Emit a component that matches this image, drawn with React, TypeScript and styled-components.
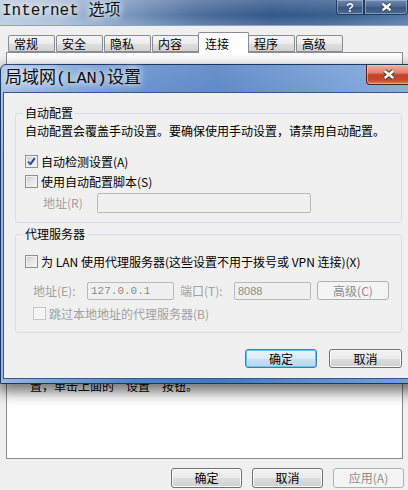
import React from "react";
import styled, { createGlobalStyle } from "styled-components";

const Global = createGlobalStyle`
  html, body { margin: 0; padding: 0; background: #f0f0f0; }
  body { font-family: "Noto Sans CJK SC", "Liberation Sans", sans-serif; font-size: 12px; color: #000; }
  * { box-sizing: border-box; }
`;

const CJK = `"Noto Sans CJK SC", "Liberation Sans", sans-serif`;

const Screen = styled.div`
  position: relative;
  width: 408px;
  height: 490px;
  overflow: hidden;
  background: #f0f0f0;
`;

/* ---------- background window: Internet 选项 ---------- */
const BackWindow = styled.div`
  display: flex;
  flex-direction: column;
  height: 490px;
`;

const BackTitle = styled.div`
  height: 26px;
  display: flex;
  align-items: flex-start;
  border-bottom: 1px solid #8aa3c2;
  background:
    linear-gradient(180deg, rgba(255,255,255,0.18) 0%, rgba(255,255,255,0) 60%, rgba(255,255,255,0.15) 100%),
    linear-gradient(90deg, #b9cadf 0%, #a8bdd6 14%, #7c99c0 30%, #4d6e9c 48%, #34578a 66%, #3a5d8e 82%, #5377a6 100%);
`;

const BackTitleText = styled.div`
  padding-left: 2px;
  line-height: 23px;
  font-size: 16px;
  font-family: "Liberation Mono", "Noto Sans CJK SC", monospace;
  color: #111;
  text-shadow: 0 0 6px #fff, 0 0 10px rgba(255,255,255,0.9);
  white-space: nowrap;
`;

const CaptionGroup = styled.div`
  margin-left: auto;
  display: flex;
`;

const CaptionButton = styled.div<{ $w: number; $red?: boolean; $h: number }>`
  width: ${(p) => p.$w}px;
  height: ${(p) => p.$h}px;
  display: flex;
  align-items: center;
  justify-content: center;
  border: 1px solid ${(p) => (p.$red ? "#5e1a10" : "#243b5e")};
  border-top: none;
  box-shadow: inset 0 0 0 1px ${(p) => (p.$red ? "rgba(255,200,190,0.55)" : "rgba(200,215,235,0.45)")};
  background: ${(p) =>
    p.$red
      ? "linear-gradient(180deg, #eab1a3 0%, #dc8670 40%, #c4402a 52%, #c24a30 80%, #d9805f 100%)"
      : "linear-gradient(180deg, #6f88ad 0%, #4e6b96 45%, #39577f 55%, #4a6a96 100%)"};
  color: #fff;
  font: bold 13px "Liberation Sans", sans-serif;
  text-shadow: 0 0 2px #1c2c44, 0 0 1px #1c2c44;
  &:first-child { border-bottom-left-radius: 4px; }
  &:last-child { border-bottom-right-radius: 4px; }
`;

const BackBody = styled.div`
  flex: 1;
  display: flex;
  flex-direction: column;
  padding-top: 6px;
  background: #f0f0f0;
`;

const TabStrip = styled.div`
  position: relative;
  z-index: 1;
  height: 20px;
  display: flex;
  align-items: flex-end;
  padding-left: 8px;
`;

const Tab = styled.div<{ $active?: boolean }>`
  width: ${(p) => (p.$active ? 51 : 47)}px;
  height: ${(p) => (p.$active ? 21 : 17)}px;
  margin: ${(p) => (p.$active ? "0 -1px -1px -2px" : "0 1px 0 0")};
  padding: ${(p) => (p.$active ? "1px 0 0 6px" : "0 0 0 5px")};
  border: 1px solid #898c95;
  border-bottom: ${(p) => (p.$active ? "none" : "1px solid #898c95")};
  border-radius: 2px 2px 0 0;
  background: ${(p) =>
    p.$active
      ? "#ffffff"
      : "linear-gradient(180deg, #f4f4f4 0%, #ececec 50%, #dedede 51%, #d2d2d2 100%)"};
  display: flex;
  align-items: center;
  font-size: 12px;
  line-height: 12px;
  white-space: nowrap;
`;

const Panel = styled.div`
  flex: 1;
  margin: 0 5px 0 6px;
  border: 1px solid #898c95;
  background: #ffffff;
  padding: 326px 0 0 23px;
`;

const PanelLine = styled.div`
  font-size: 12px;
  line-height: 13px;
  white-space: nowrap;
`;

const BackButtons = styled.div`
  height: 31px;
  display: flex;
  justify-content: flex-end;
  align-items: flex-start;
  gap: 10px;
  padding: 9px 4px 0 0;
`;

const Button = styled.div<{ $w: number; $h: number; $default?: boolean; $disabled?: boolean }>`
  width: ${(p) => p.$w}px;
  height: ${(p) => p.$h}px;
  display: flex;
  align-items: center;
  justify-content: center;
  border-radius: 3px;
  font-size: 12px;
  line-height: 12px;
  white-space: nowrap;
  border: 1px solid ${(p) => (p.$default ? "#3c7fb1" : p.$disabled ? "#adb2b5" : "#707070")};
  color: ${(p) => (p.$disabled ? "#8d8d8d" : "#000")};
  background: ${(p) =>
    p.$default
      ? "linear-gradient(180deg, #eaf5fc 0%, #dcecf7 50%, #c9e0f0 51%, #bcd6ea 100%)"
      : p.$disabled
      ? "#f4f4f4"
      : "linear-gradient(180deg, #f2f2f2 0%, #ebebeb 50%, #dddddd 51%, #cfcfcf 100%)"};
  box-shadow: inset 0 0 0 1px ${(p) => (p.$default ? "#64c8f2" : p.$disabled ? "#f4f4f4" : "#fcfcfc")};
`;

/* ---------- LAN dialog ---------- */
const Dialog = styled.div`
  position: absolute;
  left: 0;
  top: 64px;
  z-index: 2;
  width: 418px;
  height: 320px;
  display: flex;
  flex-direction: column;
  padding: 0 3px 5px 2px;
  border: 1px solid #1b3763;
  border-radius: 6px 6px 0 0;
  background:
    linear-gradient(180deg, rgba(255,255,255,0.2) 0%, rgba(255,255,255,0) 30%),
    linear-gradient(90deg, #9ab8e2 0%, #7ca2d8 12%, #5283c7 32%, #4576bf 52%, #5a8acb 72%, #77a2da 100%);
  box-shadow: 0 6px 14px 2px rgba(0, 0, 0, 0.55);
`;

const DialogTitle = styled.div`
  height: 27px;
  display: flex;
  align-items: flex-start;
`;

const DialogTitleText = styled.div`
  padding-left: 2px;
  line-height: 27px;
  font-size: 17px;
  font-family: "Liberation Mono", "Noto Sans CJK SC", monospace;
  color: #0c0c0c;
  text-shadow: 0 0 6px rgba(255,255,255,0.95), 0 0 10px rgba(255,255,255,0.8);
  white-space: nowrap;
`;

const CloseSlot = styled.div`
  margin-left: auto;
  margin-right: 2px;
  display: flex;
`;

const Client = styled.div`
  flex: 1;
  display: flex;
  flex-direction: column;
  border: 1px solid #34588c;
  background: #f0f0f0;
  padding: 14px 0 10px;
`;

const Group = styled.fieldset<{ $pb: number; $mt?: number }>`
  margin: ${(p) => p.$mt ?? 0}px 11px 0;
  padding: 0 0 ${(p) => p.$pb}px 0;
  min-width: 0;
  border: 1px solid #d5dfe5;
  border-radius: 3px;
`;

const Legend = styled.legend`
  margin-left: 7px;
  padding: 0 2px;
  font-size: 12px;
  line-height: 12px;
  font-family: ${CJK};
`;

const Row = styled.div<{ $mt: number; $pl: number; $h?: number }>`
  margin-top: ${(p) => p.$mt}px;
  padding-left: ${(p) => p.$pl}px;
  height: ${(p) => p.$h ?? 12}px;
  display: flex;
  align-items: center;
  white-space: nowrap;
  font-size: 12px;
  line-height: 12px;
`;

const Label = styled.span<{ $disabled?: boolean; $w?: number }>`
  color: ${(p) => (p.$disabled ? "#a0a0a0" : "#000")};
  width: ${(p) => (p.$w ? `${p.$w}px` : "auto")};
  flex: none;
`;

const CheckBox = styled.span<{ $disabled?: boolean }>`
  width: 13px;
  height: 13px;
  flex: none;
  margin-right: 3px;
  display: flex;
  align-items: center;
  justify-content: center;
  border: 1px solid ${(p) => (p.$disabled ? "#c4c4c4" : "#8e8f8f")};
  background: ${(p) =>
    p.$disabled ? "#f4f4f4" : "linear-gradient(135deg, #c9c9c9 0%, #e4e4e4 45%, #f9f9f9 100%)"};
  box-shadow: inset 0 0 0 1px ${(p) => (p.$disabled ? "#f7f7f7" : "#f2f2f2")};
`;

const Field = styled.div<{ $w: number; $h: number; $mono?: boolean }>`
  width: ${(p) => p.$w}px;
  height: ${(p) => p.$h}px;
  flex: none;
  display: flex;
  align-items: center;
  padding-left: 3px;
  border: 1px solid #b9b9b9;
  border-radius: 2px;
  background: #f0f0f0;
  color: #8a8a8a;
  font-family: ${(p) => (p.$mono ? `"Liberation Mono", monospace` : `"Liberation Sans", sans-serif`)};
  font-size: 11px;
`;

const Gap = styled.span<{ $w: number }>`
  width: ${(p) => p.$w}px;
  flex: none;
`;

const DialogButtons = styled.div`
  margin-top: 16px;
  padding-right: 11px;
  display: flex;
  justify-content: flex-end;
  gap: 12px;
`;

const Check = () => (
  <svg width="9" height="9" viewBox="0 0 9 9">
    <path d="M1.2 4.6 L3.4 7.2 L7.8 1.2" stroke="#27478a" strokeWidth="2" fill="none" strokeLinejoin="round" />
    <path d="M1.6 4.6 L3.4 6.6" stroke="#6f8fcf" strokeWidth="0.8" fill="none" />
  </svg>
);

const XGlyph = ({ w, h }: { w: number; h: number }) => (
  <svg width={w} height={h} viewBox="0 0 13 10">
    <path d="M2.5 1.8 L10.5 8.2 M10.5 1.8 L2.5 8.2" stroke="#3b3b3b" strokeWidth="4.2" fill="none" />
    <path d="M2.5 1.8 L10.5 8.2 M10.5 1.8 L2.5 8.2" stroke="#ffffff" strokeWidth="2.4" fill="none" />
  </svg>
);

const tabs = ["常规", "安全", "隐私", "内容", "连接", "程序", "高级"];

export default function App() {
  return (
    <Screen>
      <Global />
      <BackWindow>
        <BackTitle>
          <BackTitleText>Internet 选项</BackTitleText>
          <CaptionGroup>
            <CaptionButton $w={28} $h={15}>?</CaptionButton>
            <CaptionButton $w={44} $h={15}>
              <XGlyph w={13} h={10} />
            </CaptionButton>
          </CaptionGroup>
        </BackTitle>
        <BackBody>
          <TabStrip>
            {tabs.map((t) => (
              <Tab key={t} $active={t === "连接"}>
                {t}
              </Tab>
            ))}
          </TabStrip>
          <Panel>
            <PanelLine>置，单击上面的“设置”按钮。</PanelLine>
          </Panel>
          <BackButtons>
            <Button $w={71} $h={20}>确定</Button>
            <Button $w={71} $h={20}>取消</Button>
            <Button $w={71} $h={20} $disabled>应用(A)</Button>
          </BackButtons>
        </BackBody>
      </BackWindow>

      <Dialog>
        <DialogTitle>
          <DialogTitleText>局域网(LAN)设置</DialogTitleText>
          <CloseSlot>
            <CaptionButton $w={46} $h={20} $red>
              <XGlyph w={14} h={11} />
            </CaptionButton>
          </CloseSlot>
        </DialogTitle>
        <Client>
          <Group $pb={9}>
            <Legend>自动配置</Legend>
            <Row $mt={6} $pl={9}>
              <Label>自动配置会覆盖手动设置。要确保使用手动设置，请禁用自动配置。</Label>
            </Row>
            <Row $mt={18} $pl={9} $h={13}>
              <CheckBox>
                <Check />
              </CheckBox>
              <Label>自动检测设置(A)</Label>
            </Row>
            <Row $mt={7} $pl={9} $h={13}>
              <CheckBox />
              <Label>使用自动配置脚本(S)</Label>
            </Row>
            <Row $mt={5} $pl={27} $h={20}>
              <Label $disabled $w={54}>地址(R)</Label>
              <Field $w={214} $h={20} />
            </Row>
          </Group>

          <Group $pb={12} $mt={5}>
            <Legend>代理服务器</Legend>
            <Row $mt={15} $pl={9} $h={13}>
              <CheckBox />
              <Label>为 LAN 使用代理服务器(这些设置不用于拨号或 VPN 连接)(X)</Label>
            </Row>
            <Row $mt={13} $pl={17} $h={19}>
              <Label $disabled $w={54}>地址(E):</Label>
              <Field $w={87} $h={18} $mono>127.0.0.1</Field>
              <Gap $w={6} />
              <Label $disabled $w={54}>端口(T):</Label>
              <Field $w={77} $h={18}>8088</Field>
              <Gap $w={6} />
              <Button $w={72} $h={19} $disabled>高级(C)</Button>
            </Row>
            <Row $mt={7} $pl={17} $h={13}>
              <CheckBox $disabled />
              <Label $disabled>跳过本地地址的代理服务器(B)</Label>
            </Row>
          </Group>

          <DialogButtons>
            <Button $w={72} $h={19} $default>确定</Button>
            <Button $w={73} $h={19}>取消</Button>
          </DialogButtons>
        </Client>
      </Dialog>
    </Screen>
  );
}
